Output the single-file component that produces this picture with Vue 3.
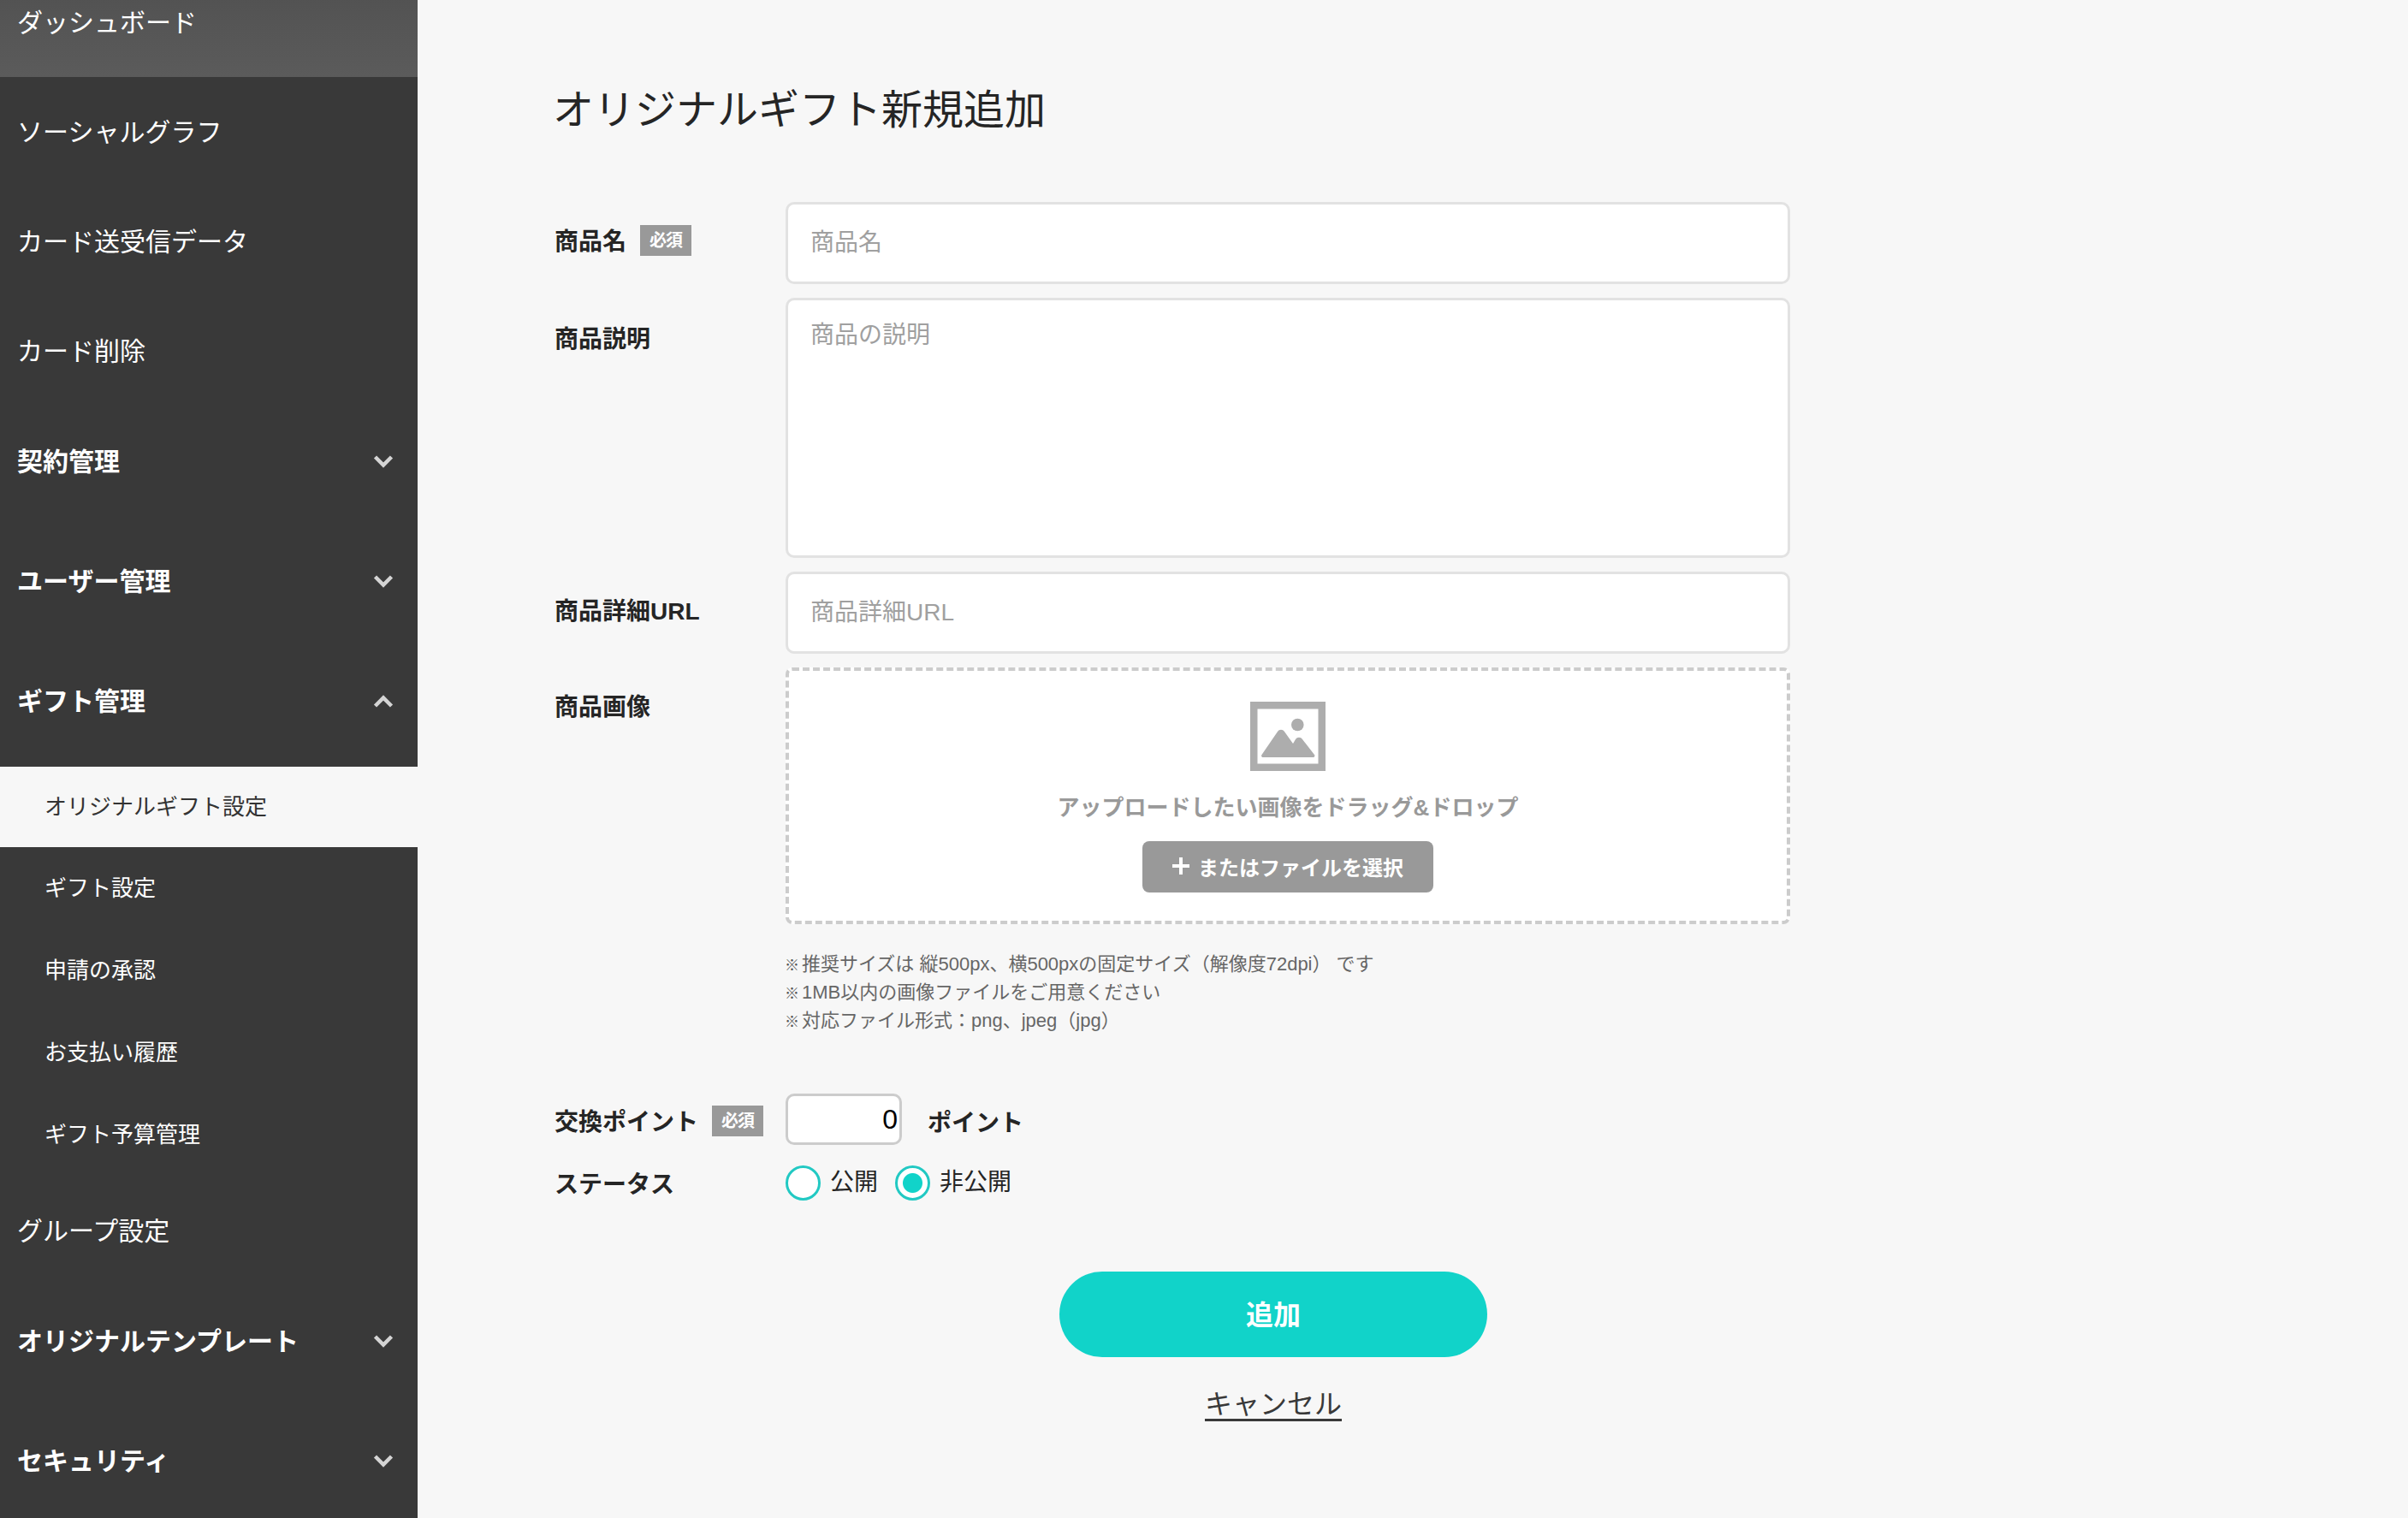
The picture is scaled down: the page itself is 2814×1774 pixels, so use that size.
<script setup>
const top = [
  { label: 'ダッシュボード', current: true },
  { label: 'ソーシャルグラフ' },
  { label: 'カード送受信データ' },
  { label: 'カード削除' },
  { label: '契約管理', group: 'down' },
  { label: 'ユーザー管理', group: 'down' },
  { label: 'ギフト管理', group: 'up' }
]
const subs = ['オリジナルギフト設定', 'ギフト設定', '申請の承認', 'お支払い履歴', 'ギフト予算管理']
const bottom = [
  { label: 'グループ設定' },
  { label: 'オリジナルテンプレート', group: 'down' },
  { label: 'セキュリティ', group: 'down' }
]
const notes = [
  '推奨サイズは 縦500px、横500pxの固定サイズ（解像度72dpi） です',
  '1MB以内の画像ファイルをご用意ください',
  '対応ファイル形式：png、jpeg（jpg）'
]
</script>

<template>
  <div class="page">
    <aside class="side">
      <nav class="nav">
        <div
          v-for="it in top"
          :key="it.label"
          class="item"
          :class="{ current: it.current, group: it.group, open: it.group === 'up' }"
        >
          <span>{{ it.label }}</span>
          <svg v-if="it.group" class="chev" :class="{ up: it.group === 'up' }" viewBox="0 0 24 16">
            <path d="M2.5 3 12 12.500 21.500 3" />
          </svg>
        </div>
        <div
          v-for="(s, i) in subs"
          :key="s"
          class="sub"
          :class="{ active: i === 0 }"
        >{{ s }}</div>
        <div
          v-for="it in bottom"
          :key="it.label"
          class="item"
          :class="{ group: it.group }"
        >
          <span>{{ it.label }}</span>
          <svg v-if="it.group" class="chev" viewBox="0 0 24 16">
            <path d="M2.5 3 12 12.500 21.500 3" />
          </svg>
        </div>
      </nav>
    </aside>

    <main class="main">
      <h1 class="title">オリジナルギフト新規追加</h1>

      <div class="rows">
        <div class="row">
          <div class="label name-label"><b>商品名</b><em class="req">必須</em></div>
          <input class="field" type="text" placeholder="商品名" />
        </div>
        <div class="row">
          <div class="label desc-label"><b>商品説明</b></div>
          <textarea class="field area" placeholder="商品の説明"></textarea>
        </div>
        <div class="row">
          <div class="label url-label"><b>商品詳細URL</b></div>
          <input class="field" type="text" placeholder="商品詳細URL" />
        </div>
        <div class="row">
          <div class="label image-label"><b>商品画像</b></div>
          <div class="drop">
            <svg class="pic" viewBox="0 0 88 81">
              <path fill-rule="evenodd" d="M0 0H88V81H0ZM8.500 8.500V72.500H79.500V8.500Z" />
              <circle cx="55.300" cy="27" r="7.300" />
              <path d="M15 65C13.500 65 12.500 63.500 13.500 62L32 35C34 32 38 32 40 35L50 49 53 44C55 41 59 41 61 44L75 62C76 63.500 75 65 73.500 65Z" />
            </svg>
            <p class="drop-text">アップロードしたい画像をドラッグ&amp;ドロップ</p>
            <button class="pick" type="button">
              <svg class="plus" viewBox="0 0 20 20"><path d="M10 0V20M0 10H20" /></svg>
              またはファイルを選択
            </button>
          </div>
        </div>
      </div>

      <ul class="notes">
        <li v-for="n in notes" :key="n"><span class="mark">※</span>{{ n }}</li>
      </ul>

      <div class="row point-row">
        <div class="label point-label"><b>交換ポイント</b><em class="req">必須</em></div>
        <input class="point" type="text" value="0" />
        <b class="unit">ポイント</b>
      </div>

      <div class="row status-row">
        <div class="label status-label"><b>ステータス</b></div>
        <label class="radio"><i class="dot"></i>公開</label>
        <label class="radio"><i class="dot on"></i>非公開</label>
      </div>

      <div class="actions">
        <button class="submit" type="button">追加</button>
        <a class="cancel">キャンセル</a>
      </div>
    </main>
  </div>
</template>

<style>
html, body { margin: 0; background: #f7f7f7; overflow: hidden; }
</style>

<style scoped>
.page {
  display: flex;
  width: 2814px;
  height: 1774px;
  overflow: hidden;
  background: #f7f7f7;
  color: #252525;
  font-family: "Liberation Sans", "Noto Sans CJK JP", sans-serif;
}
.side {
  flex: 0 0 488px;
  background: #393939;
  overflow: hidden;
}
.nav {
  margin-top: -38px;
  color: #fff;
}
.item {
  display: flex;
  align-items: center;
  justify-content: space-between;
  box-sizing: border-box;
  height: 128px;
  padding: 0 28px 4px 20px;
  font-size: 30px;
}
.item.current {
  background: linear-gradient(#4f4f4f, #5b5b5b);
}
.item.group {
  height: 140px;
  padding-bottom: 15px;
  font-size: 30px;
  font-weight: 700;
}
.item.group.open {
  height: 142px;
  padding-bottom: 17px;
}
.chev {
  width: 24px;
  height: 16px;
  fill: none;
  stroke: #d4d4d4;
  stroke-width: 4.5;
  transform: translateY(2px);
}
.chev.up { transform: translateY(3px) rotate(180deg); }
.sub {
  display: flex;
  align-items: center;
  box-sizing: border-box;
  height: 96px;
  padding: 0 0 6px 52px;
  font-size: 26px;
}
.sub:last-of-type { height: 95px; }
.sub.active {
  height: 94px;
  padding-bottom: 5px;
  background: #f7f7f7;
  color: #333;
}
.main {
  flex: 1;
  min-width: 0;
  padding-left: 160px;
}
.title {
  margin: 0 0 72px -2px;
  padding-top: 94px;
  line-height: 70px;
  height: 70px;
  font-size: 48px;
  font-weight: 400;
}
.rows {
  display: flex;
  flex-direction: column;
  gap: 16px;
}
.row {
  display: flex;
}
.label {
  flex: 0 0 270px;
  display: flex;
  align-items: center;
  font-size: 28px;
  line-height: 40px;
  height: 40px;
}
.name-label { margin-top: 25px; }
.desc-label { margin-top: 29px; }
.url-label { margin-top: 27px; }
.image-label { margin-top: 27px; }
.status-label { margin-top: 6px; }
.point-label { margin-top: 4px; }
.label b { font-weight: 700; }
.name-label b, .point-label b { padding-top: 4px; }
.req {
  display: flex;
  align-items: center;
  justify-content: center;
  width: 60px;
  height: 36px;
  margin-left: 16px;
  background: #999;
  color: #fff;
  font-size: 20px;
  font-style: normal;
  font-weight: 700;
  letter-spacing: -1px;
}
.field {
  box-sizing: border-box;
  width: 1174px;
  height: 96px;
  padding: 0 26px;
  background: #fff;
  border: 3px solid #e2e2e2;
  border-radius: 10px;
  outline: none;
  color: #333;
  font: 28px "Liberation Sans", "Noto Sans CJK JP", sans-serif;
}
.field::placeholder { color: #a0a0a0; opacity: 1; }
.area {
  display: block;
  height: 304px;
  padding-top: 18px;
  resize: none;
}
.drop {
  box-sizing: border-box;
  width: 1174px;
  height: 300px;
  padding-top: 36px;
  display: flex;
  flex-direction: column;
  align-items: center;
  background: #fff;
  border: 4px dashed #ccc;
  border-radius: 8px;
}
.pic {
  width: 88px;
  height: 81px;
  fill: #adadad;
}
.drop-text {
  margin: 24px 0 0;
  font-size: 26px;
  line-height: 38px;
  font-weight: 700;
  color: #999;
}
.pick {
  display: flex;
  align-items: center;
  justify-content: center;
  gap: 10px;
  box-sizing: border-box;
  width: 340px;
  height: 60px;
  margin-top: 20px;
  padding: 0 0 2px;
  border: 0;
  border-radius: 8px;
  background: #999;
  color: #fff;
  font: 700 24px "Liberation Sans", "Noto Sans CJK JP", sans-serif;
}
.plus {
  width: 20px;
  height: 20px;
  fill: none;
  stroke: #fff;
  stroke-width: 4;
}
.notes {
  margin: 30px 0 0 269px;
  padding: 0;
  list-style: none;
  font-size: 22px;
  color: #666;
}
.notes li {
  height: 33px;
  line-height: 33px;
}
.mark {
  display: inline-block;
  width: 20px;
  line-height: 1;
  font-size: 17px;
  font-weight: 700;
  color: #555;
}
.point-row {
  align-items: center;
  margin-top: 69px;
}
.point {
  box-sizing: border-box;
  width: 136px;
  height: 60px;
  padding: 0 2px 0 0;
  background: #fff;
  border: 3px solid #ccc;
  border-radius: 10px;
  outline: none;
  text-align: right;
  color: #000;
  font: 32px "Liberation Sans", "Noto Sans CJK JP", sans-serif;
}
.unit {
  margin: 4px 0 0 30px;
  font-size: 28px;
}
.status-row {
  align-items: center;
  margin-top: 21px;
  font-size: 28px;
}
.radio {
  display: flex;
  align-items: center;
  margin-right: 20px;
  line-height: 42px;
}
.dot {
  box-sizing: border-box;
  width: 41px;
  height: 41px;
  margin-right: 11px;
  border: 3px solid #22c9c3;
  border-radius: 50%;
  background: #fff;
}
.dot.on {
  background: radial-gradient(circle, #11d3c9 0 11px, #fff 12px);
}
.actions {
  display: flex;
  flex-direction: column;
  align-items: center;
  gap: 33px;
  width: 1680px;
  margin-top: 81px;
}
.submit {
  box-sizing: border-box;
  width: 500px;
  height: 100px;
  padding: 0 0 5px;
  border: 0;
  border-radius: 50px;
  background: #11d3c9;
  color: #fff;
  font: 700 32px "Liberation Sans", "Noto Sans CJK JP", sans-serif;
}
.cancel {
  font-size: 32px;
  line-height: 44px;
  color: #393939;
  text-decoration: underline;
  text-decoration-thickness: 3px;
  text-underline-offset: 6px;
}
</style>
